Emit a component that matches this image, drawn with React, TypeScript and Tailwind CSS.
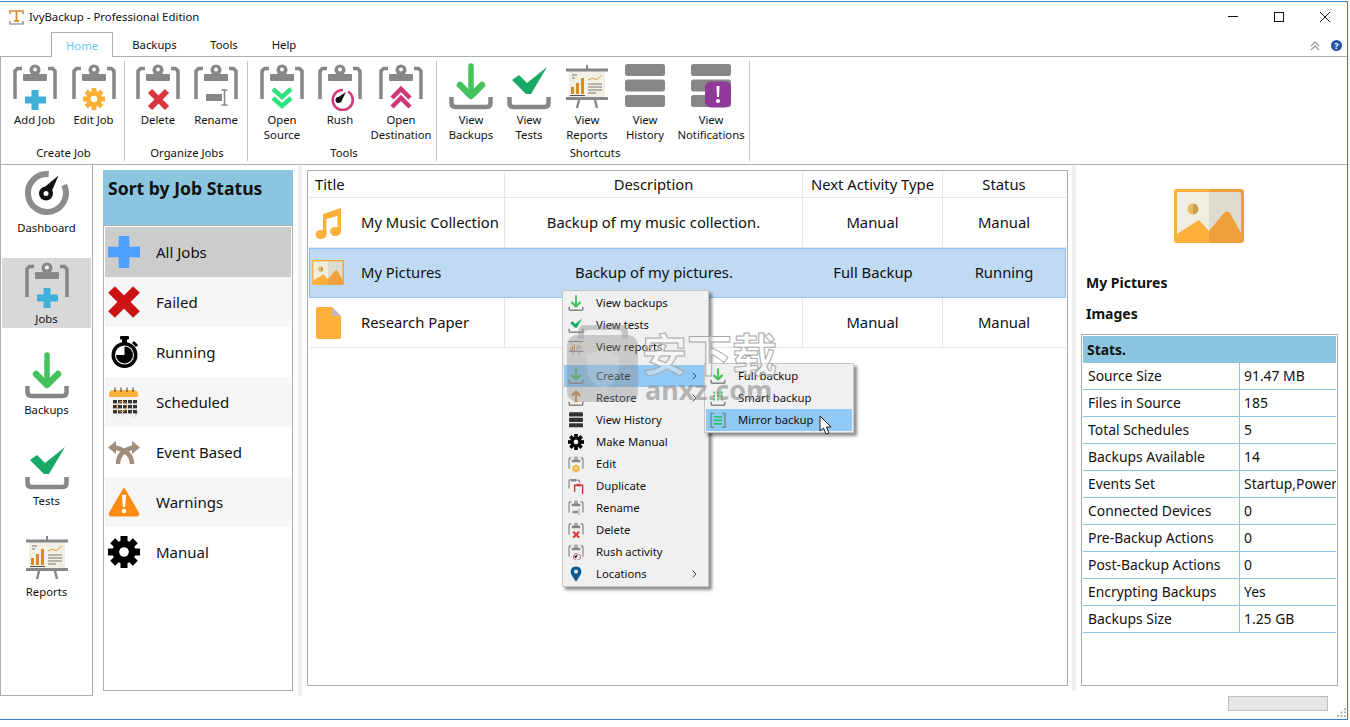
import React from "react";

const GR = "#878787";

type IP = { w?: number; children?: React.ReactNode };

function Ico({ w = 46, children }: IP) {
  return (
    <svg width={w} height={(w * 48) / 46} viewBox="0 0 46 48" className="block shrink-0">
      {children}
    </svg>
  );
}

function Clip() {
  return (
    <g>
      <path d="M10 5.5H5.5L3 8V36" fill="none" stroke={GR} strokeWidth="3.5" />
      <path d="M36 5.5H40.5L43 8V36" fill="none" stroke={GR} strokeWidth="3.5" />
      <circle cx="23" cy="7" r="5.5" fill={GR} />
      <circle cx="23" cy="6.5" r="2" fill="#fff" />
      <rect x="11" y="11" width="24" height="7" rx="1" fill={GR} />
    </g>
  );
}

function Gear({ cx, cy, r, color, hole = "#fff" }: { cx: number; cy: number; r: number; color: string; hole?: string }) {
  const teeth = [0, 45, 90, 135, 180, 225, 270, 315];
  return (
    <g>
      {teeth.map((a) => (
        <rect
          key={a}
          x={cx - r * 0.22}
          y={cy - r}
          width={r * 0.44}
          height={r * 0.5}
          fill={color}
          transform={`rotate(${a} ${cx} ${cy})`}
        />
      ))}
      <circle cx={cx} cy={cy} r={r * 0.72} fill={color} />
      <circle cx={cx} cy={cy} r={r * 0.3} fill={hole} />
    </g>
  );
}

const AddJob = ({ w }: IP) => (
  <Ico w={w}>
    <Clip />
    <path d="M23 27V47M13 37H34" stroke="#41b0d8" strokeWidth="7" />
  </Ico>
);
const EditJob = ({ w }: IP) => (
  <Ico w={w}>
    <Clip />
    <Gear cx={23} cy={36} r={11} color="#fcb032" />
  </Ico>
);
const DeleteJob = ({ w }: IP) => (
  <Ico w={w}>
    <Clip />
    <path d="M15 28L32 45M32 28L15 45" stroke="#d9363e" strokeWidth="6" />
  </Ico>
);
const RenameJob = ({ w }: IP) => (
  <Ico w={w}>
    <Clip />
    <rect x="13" y="31" width="16" height="7" fill={GR} />
    <path d="M31.5 27V42M28.5 27H34.5M28.5 42H34.5" stroke={GR} strokeWidth="1.5" fill="none" />
  </Ico>
);
const OpenSource = ({ w }: IP) => (
  <Ico w={w}>
    <Clip />
    <path d="M14 26L23 34L32 26M14 35L23 43L32 35" stroke="#2ee27e" strokeWidth="4.5" fill="none" />
  </Ico>
);
const RushJob = ({ w }: IP) => (
  <Ico w={w}>
    <Clip />
    <path d="M31 28.5A10 10 0 1 1 26 27" fill="none" stroke="#d1357a" strokeWidth="2.6" />
    <circle cx="21.5" cy="37" r="3" fill="#111" />
    <path d="M20 35L29 29L24 39Z" fill="#111" />
  </Ico>
);
const OpenDest = ({ w }: IP) => (
  <Ico w={w}>
    <Clip />
    <path d="M14 35L23 26L32 35M14 44L23 35L32 44" stroke="#d1357a" strokeWidth="4.5" fill="none" />
  </Ico>
);
const DupJob = ({ w }: IP) => (
  <Ico w={w}>
    <path d="M10 5.5H5L3 8V30" fill="none" stroke={GR} strokeWidth="3.5" />
    <path d="M24 6H30L33 9V14" fill="none" stroke={GR} strokeWidth="3.5" />
    <rect x="9" y="3" width="14" height="7" fill={GR} />
    <path d="M19 40V21H42V46" fill="none" stroke="#c9333c" strokeWidth="4" />
    <rect x="25" y="17" width="11" height="7" fill="#c9333c" />
  </Ico>
);

const Tray = () => (
  <path d="M3.5 34V40Q3.5 44 7.5 44H38.5Q42.5 44 42.5 40V34" fill="none" stroke={GR} strokeWidth="4.5" />
);
const Download = ({ w }: IP) => (
  <Ico w={w}>
    <Tray />
    <path d="M23 3V30" stroke="#45c15f" strokeWidth="5.5" strokeLinecap="round" />
    <path d="M12 22L23 33L34 22" stroke="#45c15f" strokeWidth="6.5" fill="none" strokeLinecap="round" strokeLinejoin="round" />
  </Ico>
);
const Upload = ({ w }: IP) => (
  <Ico w={w}>
    <Tray />
    <path d="M23 36V10" stroke="#d7924a" strokeWidth="6.5" />
    <path d="M11 17L23 5L35 17" stroke="#d7924a" strokeWidth="7" fill="none" />
  </Ico>
);
const Check = ({ w }: IP) => (
  <Ico w={w}>
    <Tray />
    <path d="M6 17L13 12L21 20L41 4L25 31H20Z" fill="#18a966" />
  </Ico>
);
const Present = ({ w }: IP) => (
  <Ico w={w}>
    <rect x="22" y="2" width="2" height="5" fill={GR} />
    <rect x="5" y="8" width="36" height="27" fill="#f2efe4" />
    <rect x="2" y="5.5" width="42" height="3" fill={GR} />
    <rect x="2" y="34" width="42" height="3" fill={GR} />
    <path d="M15 37L13 45M31 37L33 45" stroke={GR} strokeWidth="2.4" />
    <rect x="7" y="24" width="3" height="7" fill="#d98a28" />
    <rect x="12" y="20" width="3" height="11" fill="#d98a28" />
    <rect x="17" y="15" width="3" height="16" fill="#d98a28" />
    <rect x="6" y="32" width="15" height="1" fill="#555" />
    <path d="M8 12H13M8 15H11" stroke="#777" strokeWidth="1" />
    <path d="M24 17L29 15L32 17L38 12" stroke="#e39a3d" strokeWidth="1" fill="none" />
    <path d="M24 21H38M24 24H38M24 27H38M24 30H32" stroke="#777" strokeWidth="1" />
  </Ico>
);
const Stack = () => (
  <g fill={GR}>
    <rect x="3" y="1" width="40" height="12" rx="2.5" />
    <rect x="3" y="16.5" width="40" height="12" rx="2.5" />
    <rect x="3" y="32" width="40" height="12" rx="2.5" />
  </g>
);
const History = ({ w }: IP) => (
  <Ico w={w}>
    <Stack />
  </Ico>
);
const HistoryDark = ({ w }: IP) => (
  <Ico w={w}>
    <g fill="#333">
      <rect x="3" y="1" width="40" height="12" rx="2.5" />
      <rect x="3" y="16.5" width="40" height="12" rx="2.5" />
      <rect x="3" y="32" width="40" height="12" rx="2.5" />
    </g>
  </Ico>
);
const Notif = ({ w }: IP) => (
  <Ico w={w}>
    <Stack />
    <rect x="17" y="18.5" width="26" height="26" rx="6" fill="#8e3a96" />
    <path d="M28.5 23H31.5L31 34H29Z" fill="#fff" />
    <circle cx="30" cy="38" r="2" fill="#fff" />
  </Ico>
);
const Dash = ({ w }: IP) => (
  <Ico w={w}>
    <path d="M40.2 15A19 19 0 1 1 24.7 4.1" fill="none" stroke="#8c8c8c" strokeWidth="6" />
    <path d="M19.5 18L34.5 5.5L27 23Z" fill="#111" />
    <circle cx="22" cy="23.5" r="7" fill="#111" />
    <circle cx="22" cy="23.5" r="2.5" fill="#fff" />
  </Ico>
);

function S32({ h = 32, children }: { h?: number; children: React.ReactNode }) {
  return (
    <svg width="32" height={h} viewBox={`0 0 32 ${h}`} className="block shrink-0">
      {children}
    </svg>
  );
}
const PlusB = () => (
  <S32>
    <path d="M16 0V32M0 16H32" stroke="#4d9fff" strokeWidth="10.5" />
  </S32>
);
const CrossR = () => (
  <S32>
    <path d="M3.5 3.5L28.5 28.5M28.5 3.5L3.5 28.5" stroke="#cb1313" strokeWidth="9.5" />
  </S32>
);
const Stopwatch = () => (
  <S32>
    <rect x="12" y="0" width="9" height="3.5" rx="1" fill="#000" />
    <rect x="14" y="3" width="5" height="4" fill="#000" />
    <path d="M25 6L29 10" stroke="#000" strokeWidth="3" />
    <circle cx="16.5" cy="19" r="13" fill="#000" />
    <circle cx="16.5" cy="19" r="9.5" fill="#fff" />
    <path d="M16.5 19V10.5A8.5 8.5 0 1 1 8 19Z" fill="#000" />
  </S32>
);
const Calendar = () => (
  <S32>
    <path d="M2 10H30L32 28L26 32H3Z" fill="#f4f4f0" />
    <path d="M26 32L32 26L28 24Z" fill="#ddd" />
    <path d="M1 9Q1 4 5 4H26Q30 4 30 9V11H1Z" fill="#ffb03b" />
    <path d="M7 1.5V6M13 1.5V6M19 1.5V6M25 1.5V6" stroke="#555" strokeWidth="1.2" />
    <g fill="#333">
      {[5, 10, 15, 20, 25].map((x) =>
        [14, 19, 24].map((y) => <rect key={`${x}-${y}`} x={x} y={y} width="4" height="3.4" />)
      )}
    </g>
    <circle cx="14" cy="20.5" r="5" fill="none" stroke="#e6a045" strokeWidth="1" />
  </S32>
);
const EventIcon = () => (
  <S32 h={24}>
    <path d="M10 24C10 16 15 10 25 7.5" fill="none" stroke="#a08d7b" strokeWidth="4.5" />
    <path d="M24 24C24 15 18 10 7 7.5" fill="none" stroke="#a08d7b" strokeWidth="4.5" />
    <path d="M24 1L32 7.5L24 14Z" fill="#a08d7b" />
    <path d="M8 1L0 7.5L8 14Z" fill="#a08d7b" />
  </S32>
);
const WarnIcon = () => (
  <S32 h={30}>
    <path d="M16 2L30 26Q31 28.5 28.5 28.5H3.5Q1 28.5 2 26Z" fill="#ff8c12" stroke="#ff8c12" strokeWidth="2" strokeLinejoin="round" />
    <path d="M14 8H18L17.2 20H14.8Z" fill="#fff" />
    <circle cx="16" cy="24" r="2.2" fill="#fff" />
  </S32>
);
const GearB = () => (
  <S32>
    <Gear cx={16} cy={16} r={16} color="#000" />
  </S32>
);

function Music() {
  return (
    <svg width="27" height="32" viewBox="0 0 27 32" className="block shrink-0">
      <path d="M8 7L26 1V24H22.5V9L11.5 12V27H8Z" fill="#ffb03b" />
      <ellipse cx="6" cy="27.5" rx="5.5" ry="4.5" fill="#ffb03b" />
      <ellipse cx="20.5" cy="24.5" rx="5.5" ry="4.5" fill="#ffb03b" />
    </svg>
  );
}
function Doc() {
  return (
    <svg width="25" height="32" viewBox="0 0 25 32" className="block shrink-0">
      <path d="M2 0H16L25 9V30Q25 32 23 32H2Q0 32 0 30V2Q0 0 2 0Z" fill="#ffb03b" />
      <path d="M16 0L25 9H16Z" fill="#bdbdbd" />
    </svg>
  );
}
function Pic({ w }: { w: number }) {
  return (
    <svg width={w} height={(w * 54) / 70} viewBox="0 0 70 54" className="block shrink-0">
      <path d="M3 0H35V54H3Q0 54 0 51V3Q0 0 3 0Z" fill="#ffb03b" />
      <path d="M35 0H67Q70 0 70 3V51Q70 54 67 54H35Z" fill="#f0a03a" />
      <rect x="3" y="3" width="32" height="44" fill="#f0ede1" />
      <path d="M35 3H65Q67 3 67 5V47H35Z" fill="#dedbcf" />
      <path d="M19 14.5A5.5 5.5 0 0 0 19 25.5Z" fill="#e9bd63" />
      <path d="M19 14.5A5.5 5.5 0 0 1 19 25.5Z" fill="#c9a04c" />
      <path d="M3 45L25 31L35 42V54H3Z" fill="#ffb03b" />
      <path d="M35 42L50 24Q53 21 56 24L67 44V54H35Z" fill="#f0a03a" />
    </svg>
  );
}

const RibBtn = ({ w, Icon, lines }: { w: number; Icon: (p: IP) => React.ReactElement; lines: string[] }) => (
  <div style={{ width: w }} className="flex flex-col items-center">
    <Icon />
    <div className="mt-[1px] text-center text-[11.3px] leading-[15px] text-[#111]">
      {lines.map((l) => (
        <div key={l} className="whitespace-nowrap">
          {l}
        </div>
      ))}
    </div>
  </div>
);

type BtnDef = { w: number; Icon: (p: IP) => React.ReactElement; lines: string[] };

const RibGroup = ({
  width,
  pl,
  labelPl,
  label,
  btns,
}: {
  width: number;
  pl: number;
  labelPl: number;
  label: string;
  btns: BtnDef[];
}) => (
  <div style={{ width }} className="flex h-[100px] shrink-0 flex-col border-r border-[#c4c4c4]">
    <div style={{ paddingLeft: pl }} className="flex h-[84px] pt-[2px]">
      {btns.map((b) => (
        <RibBtn key={b.lines.join()} {...b} />
      ))}
    </div>
    <div style={{ paddingLeft: labelPl }} className="text-center text-[11.3px] leading-[15px] text-[#111]">
      {label}
    </div>
  </div>
);

const NavItem = ({ Icon, label, active }: { Icon: (p: IP) => React.ReactElement; label: string; active?: boolean }) => (
  <div className={`flex h-[70px] flex-col items-center pt-[3px] ${active ? "bg-[#d8d8d8]" : ""}`}>
    <Icon />
    <div className="mt-[2px] text-[11.3px] leading-[15px] text-[#111]">{label}</div>
  </div>
);

const sortRows: { icon: React.ReactNode; label: string; cls: string }[] = [
  { icon: <PlusB />, label: "All Jobs", cls: "bg-[#cccccc]" },
  { icon: <CrossR />, label: "Failed", cls: "bg-[#f6f6f6]" },
  { icon: <Stopwatch />, label: "Running", cls: "bg-white" },
  { icon: <Calendar />, label: "Scheduled", cls: "bg-[#f6f6f6]" },
  { icon: <EventIcon />, label: "Event Based", cls: "bg-white" },
  { icon: <WarnIcon />, label: "Warnings", cls: "bg-[#f6f6f6]" },
  { icon: <GearB />, label: "Manual", cls: "bg-white" },
];

const TableRow = ({ icon, cells, sel }: { icon: React.ReactNode; cells: string[]; sel?: boolean }) => {
  const div = sel ? "" : "border-r border-[#e6e6e6]";
  return (
    <div
      className={`flex h-[50px] text-[14.8px] text-[#111] ${
        sel ? "bg-[#bfdaf2] pb-[1px] shadow-[inset_0_0_0_1px_#8dc4ef]" : "border-b border-[#e6e6e6]"
      }`}
    >
      <div className={`flex w-[196px] shrink-0 items-center ${div}`}>
        <div className="flex w-[38px] shrink-0 justify-center">{icon}</div>
        <span className="ml-[14px] whitespace-nowrap">{cells[0]}</span>
      </div>
      <div className={`flex w-[298px] shrink-0 items-center justify-center ${div}`}>{cells[1]}</div>
      <div className={`flex w-[140px] shrink-0 items-center justify-center ${div}`}>{cells[2]}</div>
      <div className="flex w-[122px] shrink-0 items-center justify-center">{cells[3]}</div>
    </div>
  );
};

const stats: [string, string][] = [
  ["Source Size", "91.47 MB"],
  ["Files in Source", "185"],
  ["Total Schedules", "5"],
  ["Backups Available", "14"],
  ["Events Set", "Startup,Power"],
  ["Connected Devices", "0"],
  ["Pre-Backup Actions", "0"],
  ["Post-Backup Actions", "0"],
  ["Encrypting Backups", "Yes"],
  ["Backups Size", "1.25 GB"],
];

const Pin = () => (
  <svg width="12" height="16" viewBox="0 0 14 18" className="block shrink-0">
    <path d="M7 18L1.5 9.5A6.3 6.3 0 1 1 12.5 9.5Z" fill="#0b5a96" />
    <circle cx="7" cy="6" r="2.3" fill="#f0f0f0" />
  </svg>
);
const Smart = () => (
  <Ico w={16}>
    <Tray />
    <path d="M12 4V30M23 4V30M34 4V30" stroke="#45c15f" strokeWidth="5" strokeDasharray="7 3" />
  </Ico>
);
const Mirror = () => (
  <Ico w={16}>
    <path d="M11 4H3V44H11M35 4H43V44H35" fill="none" stroke="#6e8f78" strokeWidth="4" />
    <path d="M11 14H35M11 24H35M11 34H35" stroke="#32c36b" strokeWidth="5" />
  </Ico>
);

const MenuRow = ({
  icon,
  label,
  arrow,
  hi,
}: {
  icon: React.ReactNode;
  label: string;
  arrow?: boolean;
  hi?: boolean;
}) => (
  <div className={`flex h-[22px] items-center text-[11.3px] text-[#111] ${hi ? "bg-[#90c8f6]" : ""}`}>
    <div className="flex w-[24px] shrink-0 justify-center">{icon}</div>
    <div className="ml-[8px] whitespace-nowrap">{label}</div>
    {arrow && (
      <svg width="5" height="8" viewBox="0 0 5 8" className="ml-auto mr-[10px]">
        <path d="M.7.7L4 4L.7 7.3" fill="none" stroke="#444" strokeWidth="1" />
      </svg>
    )}
  </div>
);

export default function App() {
  return (
    <div className="relative h-[727px] w-[1350px] overflow-hidden bg-white font-['Noto_Sans',sans-serif]">
      <div className="mt-px flex h-[719px] w-[1348px] flex-col border-y border-r border-[#2b82cf]">
        {/* title bar */}
        <div className="flex h-[29px] shrink-0 items-center pl-[9px]">
          <svg width="15" height="16" viewBox="0 0 15 16" className="block">
            <path d="M1 5V2H14V5" fill="none" stroke="#e08a2e" strokeWidth="1.6" />
            <path d="M7.5 2V12M5 12H10" stroke="#e08a2e" strokeWidth="1.8" fill="none" />
            <path d="M1 12V15H14V12" fill="none" stroke="#777" strokeWidth="1.2" />
          </svg>
          <span className="ml-[5px] text-[11.4px] text-[#111]">IvyBackup - Professional Edition</span>
          <div className="-mr-px ml-auto flex h-full">
            <div className="flex w-[46px] items-center justify-center">
              <div className="h-px w-[10px] bg-[#111]" />
            </div>
            <div className="flex w-[46px] items-center justify-center">
              <div className="h-[10px] w-[10px] border border-[#111]" />
            </div>
            <div className="flex w-[46px] items-center justify-center">
              <svg width="10" height="10" viewBox="0 0 10 10">
                <path d="M0 0L10 10M10 0L0 10" stroke="#111" strokeWidth="1" />
              </svg>
            </div>
          </div>
        </div>
        {/* tabs */}
        <div className="flex h-[26px] shrink-0 items-end border-b border-[#adadad] pl-[51px] text-[11.3px] text-[#111]">
          <div className="-mb-px flex h-[25px] w-[62px] items-center justify-center border-x border-t border-[#adadad] bg-white pt-[2px] text-[#6cc5ee]">
            Home
          </div>
          <div className="flex h-[24px] w-[83px] items-center justify-center pt-[2px]">Backups</div>
          <div className="flex h-[24px] w-[56px] items-center justify-center pt-[2px]">Tools</div>
          <div className="flex h-[24px] w-[64px] items-center justify-center pt-[2px]">Help</div>
          <div className="ml-auto mb-[5px] flex items-center">
            <svg width="10" height="10" viewBox="0 0 10 10">
              <path d="M1 5L5 1L9 5M1 9L5 5L9 9" fill="none" stroke="#a0a0a0" strokeWidth="1.4" />
            </svg>
            <div className="ml-[11px] mr-[5px] flex h-[11px] w-[11px] items-center justify-center rounded-full bg-[#2355a8] text-[9px] font-bold leading-none text-white">
              ?
            </div>
          </div>
        </div>
        {/* ribbon */}
        <div className="flex h-[108px] shrink-0 border-b border-l border-[#adadad] pt-[4px]">
          <RibGroup
            width={124}
            pl={4}
            labelPl={2}
            label="Create Job"
            btns={[
              { w: 59, Icon: AddJob, lines: ["Add Job"] },
              { w: 59, Icon: EditJob, lines: ["Edit Job"] },
            ]}
          />
          <RibGroup
            width={123}
            pl={4}
            labelPl={2}
            label="Organize Jobs"
            btns={[
              { w: 58, Icon: DeleteJob, lines: ["Delete"] },
              { w: 58, Icon: RenameJob, lines: ["Rename"] },
            ]}
          />
          <RibGroup
            width={189}
            pl={5}
            labelPl={4}
            label="Tools"
            btns={[
              { w: 58, Icon: OpenSource, lines: ["Open", "Source"] },
              { w: 58, Icon: RushJob, lines: ["Rush"] },
              { w: 64, Icon: OpenDest, lines: ["Open", "Destination"] },
            ]}
          />
          <RibGroup
            width={313}
            pl={5}
            labelPl={4}
            label="Shortcuts"
            btns={[
              { w: 58, Icon: Download, lines: ["View", "Backups"] },
              { w: 58, Icon: Check, lines: ["View", "Tests"] },
              { w: 58, Icon: Present, lines: ["View", "Reports"] },
              { w: 58, Icon: History, lines: ["View", "History"] },
              { w: 74, Icon: Notif, lines: ["View", "Notifications"] },
            ]}
          />
        </div>
        {/* main */}
        <div className="flex h-[531px] shrink-0">
          <div className="flex h-[531px] w-[93px] shrink-0 flex-col gap-[21px] border-x border-b border-[#adadad] px-px pt-[2px]">
            <NavItem Icon={Dash} label="Dashboard" />
            <NavItem Icon={AddJob} label="Jobs" active />
            <NavItem Icon={Download} label="Backups" />
            <NavItem Icon={Check} label="Tests" />
            <NavItem Icon={Present} label="Reports" />
          </div>
          <div className="ml-[10px] mt-[5px] w-[190px] shrink-0">
            <div className="h-[55px] bg-[#8cc5e0] pl-[5px] pt-[6px] text-[17.6px] font-bold leading-[24px] text-[#111]">
              Sort by Job Status
            </div>
            <div className="h-[466px] border border-[#adadad] p-px">
              {sortRows.map((r) => (
                <div key={r.label} className={`flex h-[50px] items-center pl-[3px] text-[15px] text-[#111] ${r.cls}`}>
                  <div className="flex w-[32px] justify-center">{r.icon}</div>
                  <span className="ml-[16px]">{r.label}</span>
                </div>
              ))}
            </div>
          </div>
          <div className="ml-[5px] h-[531px] w-[4px] shrink-0 bg-[#f0f0f0]" />
          <div className="ml-[5px] mt-[5px] h-[516px] w-[761px] shrink-0 border border-[#adadad] p-px">
            <div className="flex h-[26px] border-b border-[#e6e6e6] text-[14.8px] text-[#111]">
              <div className="flex w-[196px] shrink-0 items-center border-r border-[#e6e6e6] pl-[6px]">Title</div>
              <div className="flex w-[298px] shrink-0 items-center justify-center border-r border-[#e6e6e6]">Description</div>
              <div className="flex w-[140px] shrink-0 items-center justify-center border-r border-[#e6e6e6]">Next Activity Type</div>
              <div className="flex w-[122px] shrink-0 items-center justify-center">Status</div>
            </div>
            <TableRow icon={<Music />} cells={["My Music Collection", "Backup of my music collection.", "Manual", "Manual"]} />
            <TableRow sel icon={<Pic w={32} />} cells={["My Pictures", "Backup of my pictures.", "Full Backup", "Running"]} />
            <TableRow icon={<Doc />} cells={["Research Paper", "", "Manual", "Manual"]} />
          </div>
          <div className="ml-[4px] h-[526px] w-[4px] shrink-0 bg-[#f0f0f0]" />
          <div className="ml-[5px] flex w-[257px] shrink-0 flex-col">
            <div className="flex justify-center pr-[2px] pt-[24px]">
              <Pic w={70} />
            </div>
            <div className="mt-[30px] pl-[5px] text-[14px] font-bold leading-[20px] text-[#111]">My Pictures</div>
            <div className="mt-[11px] pl-[5px] text-[14px] font-bold leading-[20px] text-[#111]">Images</div>
            <div className="mt-[10px] h-[352px] w-[257px] border border-[#adadad] p-px text-[13.9px] text-[#111]">
              <div className="flex h-[27px] items-center bg-[#8cc5e0] pl-[4px] pt-[1px] font-bold">Stats.</div>
              {stats.map(([k, v]) => (
                <div key={k} className="flex h-[27px] border-b border-[#8cc5e0]">
                  <div className="flex w-[157px] shrink-0 items-center border-r border-[#8cc5e0] pl-[5px] pt-[1px] whitespace-nowrap">{k}</div>
                  <div className="flex items-center overflow-hidden pl-[4px] pt-[1px] whitespace-nowrap">{v}</div>
                </div>
              ))}
            </div>
          </div>
        </div>
        {/* status bar */}
        <div className="flex h-[22px] shrink-0 items-start">
          <div className="ml-[1228px] h-[15px] w-[100px] border border-[#bdbdbd] bg-[#e6e6e6]" />
          <svg width="10" height="10" viewBox="0 0 10 10" className="ml-auto mt-[12px] shrink-0">
            <g fill="#b5b5b5">
              <rect x="7" y="0" width="2" height="2" />
              <rect x="3.5" y="3.5" width="2" height="2" />
              <rect x="7" y="3.5" width="2" height="2" />
              <rect x="0" y="7" width="2" height="2" />
              <rect x="3.5" y="7" width="2" height="2" />
              <rect x="7" y="7" width="2" height="2" />
            </g>
          </svg>
        </div>
      </div>

      {/* context menu */}
      <div className="absolute left-[562px] top-[290px] w-[147px] border border-[#c6c6c6] bg-[#f0f0f0] p-px shadow-[3px_3px_3px_rgba(0,0,0,0.45)]">
        <MenuRow icon={<Download w={16} />} label="View backups" />
        <MenuRow icon={<Check w={16} />} label="View tests" />
        <MenuRow icon={<Present w={16} />} label="View reports" />
        <div className="h-[7px]" />
        <MenuRow icon={<Download w={16} />} label="Create" arrow hi />
        <MenuRow icon={<Upload w={16} />} label="Restore" arrow />
        <MenuRow icon={<HistoryDark w={16} />} label="View History" />
        <MenuRow
          icon={
            <svg width="16" height="16" viewBox="0 0 32 32">
              <Gear cx={16} cy={16} r={16} color="#000" hole="#f0f0f0" />
            </svg>
          }
          label="Make Manual"
        />
        <MenuRow icon={<EditJob w={16} />} label="Edit" />
        <MenuRow icon={<DupJob w={16} />} label="Duplicate" />
        <MenuRow icon={<RenameJob w={16} />} label="Rename" />
        <MenuRow icon={<DeleteJob w={16} />} label="Delete" />
        <MenuRow icon={<RushJob w={16} />} label="Rush activity" />
        <MenuRow icon={<Pin />} label="Locations" arrow />
      </div>
      <div className="absolute left-[704px] top-[363px] w-[150px] border border-[#c6c6c6] bg-[#f0f0f0] p-px shadow-[3px_3px_3px_rgba(0,0,0,0.45)]">
        <MenuRow icon={<Download w={16} />} label="Full backup" />
        <MenuRow icon={<Smart />} label="Smart backup" />
        <MenuRow icon={<Mirror />} label="Mirror backup" hi />
      </div>

      {/* watermark */}
      <div className="pointer-events-none absolute left-[567px] top-[325px] opacity-70">
        <svg width="72" height="78" viewBox="0 0 72 78" className="block">
          <path d="M14 14V8Q14 2 22 2H50Q58 2 58 8V14" fill="none" stroke="#8c8c8c" strokeOpacity="0.6" strokeWidth="6" />
          <rect x="0" y="10" width="71" height="67" rx="10" fill="#8c8c8c" fillOpacity="0.55" />
          <path d="M36 24L52 30V44Q52 56 36 64Q20 56 20 44V30Z" fill="#fff" fillOpacity="0.2" />
        </svg>
      </div>
      <div className="pointer-events-none absolute left-[642px] top-[328px] font-['Noto_Sans_CJK_SC',sans-serif] text-[45px] font-bold leading-[50px] whitespace-nowrap text-white/40 [-webkit-text-stroke:1px_#a8a8a8]">
        安下载
      </div>
      <div className="pointer-events-none absolute left-[645px] top-[374px] text-[27px] font-bold leading-[32px] whitespace-nowrap text-[#8c8c8c]/60">
        anxz.com
      </div>

      {/* cursor */}
      <svg width="14" height="20" viewBox="0 0 14 20" className="absolute left-[819px] top-[415px]">
        <path d="M1 1V16L4.5 13L7 19L10 18L7.5 12H12Z" fill="#fff" stroke="#222" strokeWidth="1" />
      </svg>
    </div>
  );
}
